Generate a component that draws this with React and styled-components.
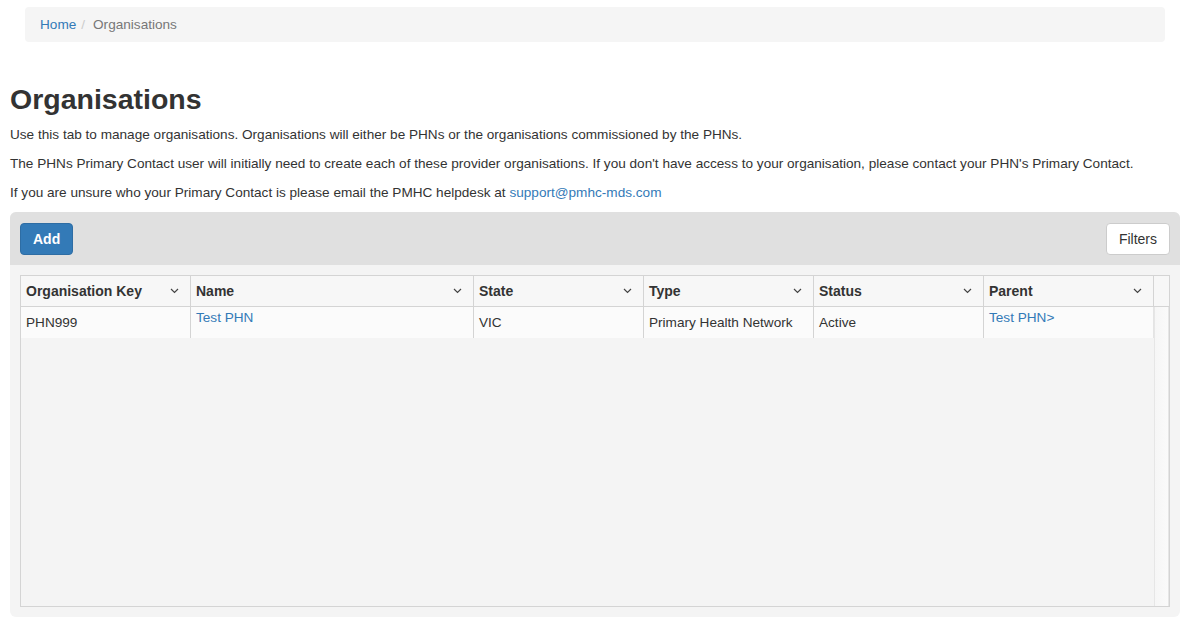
import React from 'react';
import styled, { createGlobalStyle } from 'styled-components';

const GlobalStyle = createGlobalStyle`
    body {
        margin: 0;
        background: #fff;
        font-family: 'Liberation Sans', Arial, sans-serif;
        font-size: 13.6px;
        color: #333;
    }
`;

const columns = [
    { key: 'key', title: 'Organisation Key', width: 170 },
    { key: 'name', title: 'Name', width: 283 },
    { key: 'state', title: 'State', width: 170 },
    { key: 'type', title: 'Type', width: 170 },
    { key: 'status', title: 'Status', width: 170 },
    { key: 'parent', title: 'Parent', width: 170 },
];

const rows = [
    { key: 'PHN999', name: 'Test PHN', state: 'VIC', type: 'Primary Health Network', status: 'Active', parent: 'Test PHN>' },
];

const linkCols = ['name', 'parent'];

const template = columns.map(c => c.width + 'px').join(' ') + ' 1fr';

const Chevron = () => (
    <svg width="9" height="6" viewBox="0 0 9 6">
        <path d="M1 1 L4.5 4.5 L8 1" fill="none" stroke="#444" strokeWidth="1.2" />
    </svg>
);

const App = () => (
    <Page>
        <GlobalStyle />
        <Breadcrumb>
            <Crumb href="#">Home</Crumb>
            <Divider>/</Divider>
            <Current>Organisations</Current>
        </Breadcrumb>
        <Heading>Organisations</Heading>
        <Text>Use this tab to manage organisations. Organisations will either be PHNs or the organisations commissioned by the PHNs.</Text>
        <Text>The PHNs Primary Contact user will initially need to create each of these provider organisations. If you don't have access to your organisation, please contact your PHN's Primary Contact.</Text>
        <Text>If you are unsure who your Primary Contact is please email the PMHC helpdesk at <Link href="#">support@pmhc-mds.com</Link></Text>
        <Panel>
            <Toolbar>
                <Button primary>Add</Button>
                <Button>Filters</Button>
            </Toolbar>
            <PanelBody>
                <Grid>
                    <HeaderRow>
                        {columns.map(c => (
                            <HeaderCell key={c.key}>
                                {c.title}
                                <Chevron />
                            </HeaderCell>
                        ))}
                        <HeaderCell />
                    </HeaderRow>
                    <GridBody>
                        <Rows>
                            {rows.map(r => (
                                <Row key={r.key}>
                                    {columns.map(c => (
                                        <Cell key={c.key} link={linkCols.includes(c.key)}>
                                            {linkCols.includes(c.key) ? <Link href="#">{r[c.key]}</Link> : r[c.key]}
                                        </Cell>
                                    ))}
                                </Row>
                            ))}
                        </Rows>
                        <ScrollTrack />
                    </GridBody>
                </Grid>
            </PanelBody>
        </Panel>
    </Page>
);

export default App;

const Page = styled.div`
    padding: 7px 11px 7px 10px;
`;
const Breadcrumb = styled.div`
    display: flex;
    align-items: center;
    height: 35px;
    margin: 0 15px;
    padding: 0 15px;
    background: #f5f5f5;
    border-radius: 4px;
    line-height: 20px;
`;
const Crumb = styled.a`
    color: #337ab7;
    text-decoration: none;
`;
const Divider = styled.span`
    color: #ccc;
    padding: 0 8px 0 5px;
`;
const Current = styled.span`
    color: #777;
`;
const Heading = styled.h1`
    margin: 41px 0 10px;
    font-size: 28.5px;
    line-height: 32px;
    font-weight: bold;
    color: #333;
`;
const Text = styled.p`
    margin: 0 0 9px;
    line-height: 20px;
`;
const Link = styled.a`
    color: #337ab7;
    text-decoration: none;
`;
const Panel = styled.div`
    margin-top: 9px;
    border-radius: 6px;
    overflow: hidden;
    background: #f4f4f4;
`;
const Toolbar = styled.div`
    display: flex;
    justify-content: space-between;
    align-items: center;
    height: 53px;
    padding: 0 10px;
    background: #e0e0e0;
`;
const Button = styled.button`
    height: 32px;
    padding: 0 12px;
    font-family: inherit;
    font-size: 14px;
    border-radius: 4px;
    border: 1px solid ${p => (p.primary ? '#2e6da4' : '#ccc')};
    background: ${p => (p.primary ? '#337ab7' : '#fff')};
    color: ${p => (p.primary ? '#fff' : '#333')};
    font-weight: ${p => (p.primary ? 'bold' : 'normal')};
`;
const PanelBody = styled.div`
    padding: 10px;
`;
const Grid = styled.div`
    height: 332px;
    border: 1px solid #d4d4d4;
    display: flex;
    flex-direction: column;
    box-sizing: border-box;
`;
const HeaderRow = styled.div`
    display: grid;
    grid-template-columns: ${template};
    height: 30px;
    background: #f7f7f7;
    border-bottom: 1px solid #d4d4d4;
`;
const HeaderCell = styled.div`
    display: flex;
    align-items: center;
    justify-content: space-between;
    padding: 0 11px 0 5px;
    font-size: 14px;
    font-weight: bold;
    border-right: 1px solid #d4d4d4;
    &:last-child {
        border-right: none;
    }
`;
const GridBody = styled.div`
    flex: 1;
    display: flex;
`;
const Rows = styled.div`
    width: ${columns.reduce((s, c) => s + c.width, 0)}px;
`;
const Row = styled.div`
    display: grid;
    grid-template-columns: ${columns.map(c => c.width + 'px').join(' ')};
    height: 31px;
    background: #fbfbfb;
`;
const Cell = styled.div`
    padding: ${p => (p.link ? '1px 5px 0' : '6px 5px 0')};
    border-right: 1px solid #d4d4d4;
    line-height: 20px;
    white-space: nowrap;
    overflow: hidden;
    &:last-child {
        border-right: 1px solid #e4e4e4;
    }
`;
const ScrollTrack = styled.div`
    flex: 1;
    background: linear-gradient(to right, #f6f6f6, #fafafa);
    border-left: 1px solid #e6e6e6;
    border-right: 1px solid #e6e6e6;
`;
